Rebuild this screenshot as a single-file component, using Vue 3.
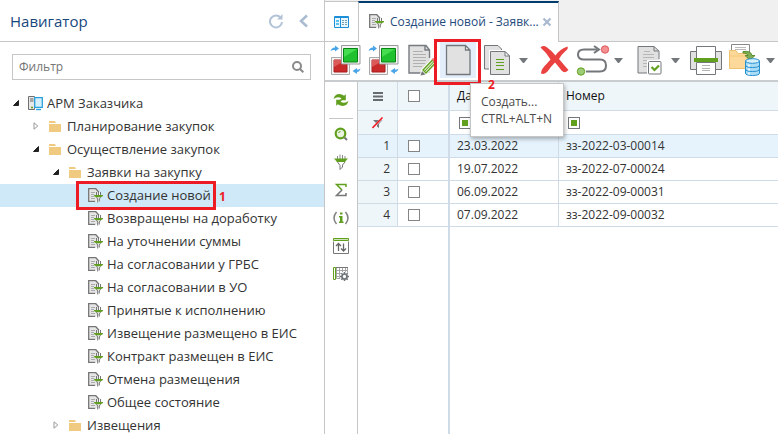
<script setup>
import { ref } from 'vue'

const filter = ref('')
const statuses = [
  'Создание новой',
  'Возвращены на доработку',
  'На уточнении суммы',
  'На согласовании у ГРБС',
  'На согласовании в УО',
  'Принятые к исполнению',
  'Извещение размещено в ЕИС',
  'Контракт размещен в ЕИС',
  'Отмена размещения',
  'Общее состояние',
]
const tree = [
  { label: 'АРМ Заказчика', level: 0, state: 'open', icon: 'server' },
  { label: 'Планирование закупок', level: 1, state: 'closed', icon: 'folder' },
  { label: 'Осуществление закупок', level: 1, state: 'open', icon: 'folder' },
  { label: 'Заявки на закупку', level: 2, state: 'open', icon: 'folder' },
  ...statuses.map((label, i) => ({ label, level: 3, state: 'leaf', icon: 'docfilter', selected: i === 0 })),
  { label: 'Извещения', level: 2, state: 'closed', icon: 'folder' },
]
const rows = [
  { date: '23.03.2022', number: 'зз-2022-03-00014' },
  { date: '19.07.2022', number: 'зз-2022-07-00024' },
  { date: '06.09.2022', number: 'зз-2022-09-00031' },
  { date: '07.09.2022', number: 'зз-2022-09-00032' },
]
const checked = ref(rows.map(() => false))
const allChecked = ref(false)
const tools = [
  { icon: 'sync', label: 'Синхронизация' },
  { icon: 'sync', label: 'Обмен' },
  { icon: 'edit', label: 'Редактировать' },
  { icon: 'new', label: 'Создать' },
  { icon: 'copy', label: 'Копировать', menu: true },
  { icon: 'delete', label: 'Удалить' },
  { icon: 'route', label: 'Маршрут', menu: true },
  { icon: 'check', label: 'Проверить', menu: true },
  { icon: 'print', label: 'Печать' },
  { icon: 'export', label: 'Экспорт', menu: true },
]
const sideTools = [
  { icon: 'search', label: 'Поиск' },
  { icon: 'funnel', label: 'Фильтр' },
  { icon: 'sum', label: 'Итоги' },
  { icon: 'info', label: 'Информация' },
  { icon: 'sort', label: 'Сортировка' },
  { icon: 'columns', label: 'Колонки' },
]
</script>

<template>
  <div class="app">
    <svg class="sprite" aria-hidden="true">
      <symbol id="docfilter" viewBox="0 0 15 15">
        <path d="M.7.7h7.8l2.8 2.8V13.3H.7z" fill="#e6e6e6" stroke="#fff" />
        <path d="M11 4.2 7.8.7H.7v12.6h6.5" fill="none" stroke="#757575" stroke-width="1.3" />
        <path d="M3 4.5h4M3 6.5h3M3 8.5h3M3 10.5h4" stroke="#aaa" />
        <path d="M8.5 4v3M10.5 3v4M12.5 4v3" stroke="#757575" />
        <path d="M6 7h9v1l-2 1.300H8L6 8z" fill="#61a01f" />
        <path d="M8.500 9.200 9.700 11v3.500M12.500 9.200 11.300 11v2.500" fill="none" stroke="#757575" />
      </symbol>
      <symbol id="folder" viewBox="0 0 15 15">
        <path d="M1 2h6l1 2H1zM1 5h12v8H1z" fill="#efca80" />
      </symbol>
      <symbol id="server" viewBox="0 0 15 15">
        <path d="M.5.5h6v13h-6z" fill="#e8e8e8" stroke="#6f6f6f" />
        <path d="M2 3h3.500M2 5h3.500" stroke="#666" stroke-width="1.200" />
        <path d="M3 11.500h2" stroke="#61a01f" stroke-width="1.500" />
        <path d="M6.700 1.700h7.600v9.600H6.700z" fill="#d5f0fc" stroke="#2ba1dc" stroke-width="1.300" />
        <path d="M8 13.500h5" stroke="#2ba1dc" stroke-width="1.400" />
      </symbol>
      <symbol id="sync" viewBox="0 0 32 32">
        <path d="M2.500 13.500h18v17h-18z" fill="#f5f5f5" stroke="#aaa" />
        <path d="M5 16h13v12H5z" fill="#c92a2a" stroke="#a91c1c" />
        <path d="M5 16h12L5 23z" fill="#dc5959" />
        <path d="M12.500 1.500h18.500v18.500H12.500z" fill="#f5f5f5" stroke="#999" />
        <path d="M14.500 4.500h14v13.500h-14z" fill="#1fc22e" stroke="#078413" />
        <path d="M15 5h13L15 13z" fill="#45dc50" />
        <path d="M1.500 7Q2.500 3.500 6 3.500V1.500l4 3-4 3V6Q3.500 5.500 1.500 7zM31.500 24.500Q30.500 28 28 28v2l-4.500-3 4.500-3v1.500Q30 26 31.500 24.500z" fill="#4aa5e8" />
      </symbol>
      <symbol id="edit" viewBox="0 0 32 32">
        <path d="M4 1.500h17l4 4.500v23H4z" fill="#e1e1e1" />
        <path d="M17 29H4V1.500h17L24.500 6v8M20 2v4h4" fill="none" stroke="#777b80" stroke-width="1.400" />
        <path d="M8 7.500h10M8 10.500h13M8 13.500h13M8 16.500h13M8 19.500h12M8 22.500h9" stroke="#b0b0b0" />
        <path d="M15.500 31.500 17 26l10-10.500 4 4L20.500 30z" fill="#fff" stroke="#fff" stroke-width="1.500" />
        <path d="m18 26 9.500-10 3 3-9.500 10z" fill="#d9ecc6" stroke="#61a01f" stroke-width="1.300" />
        <path d="m19.500 27.500 9.500-10" stroke="#61a01f" />
        <path d="m26.500 15 2-1 3 3-1 2.500z" fill="#ef7780" />
        <path d="M15.500 31.500 17 27l3.500 3.500z" fill="#777" />
      </symbol>
      <symbol id="new" viewBox="0 0 32 32">
        <path d="M4.500 1.500h19L28 6v24.500H4.500z" fill="#e1e1e1" />
        <path d="M23.500 1.500V6H28z" fill="#fff" />
        <path d="M4.500 1.500h19L28 6v24.500H4.500zM23.500 1.500V6H28" fill="none" stroke="#73777b" stroke-width="1.300" />
      </symbol>
      <symbol id="copy" viewBox="0 0 32 32">
        <path d="M3.500 1.500H17L20.500 5v20h-17z" fill="#e1e1e1" stroke="#73777b" />
        <path d="M8 6h17l5 5v21H8z" fill="#fff" />
        <path d="M9.500 7.500H24l4.500 4.500v18.500h-19z" fill="#e1e1e1" stroke="#73777b" />
        <path d="M24 7.500V12h4.500z" fill="#fff" stroke="#73777b" />
        <path d="M15 15.500h8M15 18.500h8M15 21.500h8M15 25.500h8" stroke="#61a01f" stroke-width="1.200" />
      </symbol>
      <symbol id="delete" viewBox="0 0 32 32">
        <path d="M2.500 3.500q3-2.500 6-.5Q13.500 6.500 17.500 11.500 22 5 29.500 2.500q1 2.500-2 4.500-4.500 4-6.500 8 5 6 9.500 11-3.500 4-7 .5-3-4-6.500-8Q13 22.500 9.500 27.500q-3 3.500-6.500 2 0-4.500 5.500-9.500l4-4.500Q9 9 2.500 3.500z" fill="#ea4141" />
      </symbol>
      <symbol id="route" viewBox="0 0 36 32">
        <path d="M23 5.500H10q-6 0-6 5t6 5h16q6 0 6 6t-6 6H12" fill="none" stroke="#73777b" stroke-width="2" />
        <path d="m20 2 5 3.500L20 9" fill="none" stroke="#73777b" stroke-width="2" />
        <circle cx="31" cy="5.500" r="3.700" fill="#f68f91" stroke="#dd5a5d" />
        <circle cx="7" cy="27.500" r="3.700" fill="#9dcc76" stroke="#61a01f" />
      </symbol>
      <symbol id="check" viewBox="0 0 32 32">
        <path d="M5 2.500h16L26 7v22H5z" fill="#e1e1e1" />
        <path d="M15 29H5V2.500h16L26 7v8M21 3v4h4" fill="none" stroke="#73777b" />
        <path d="M11 7.500h6M10 10.500h11M10 13.500h11M10 16.500h8M10 19.500h5M10 22.500h5" stroke="#b7b7b7" />
        <path d="M14 16h15v15H14z" fill="#fff" />
        <rect x="15.500" y="17.500" width="12.500" height="12.500" rx="1" fill="#fff" stroke="#73777b" />
        <path d="m18.500 23 3 3 4.500-4.500" fill="none" stroke="#61a01f" stroke-width="2.200" />
      </symbol>
      <symbol id="print" viewBox="0 0 34 32">
        <path d="M1.500 7.500h31v18h-31z" fill="#e1e1e1" stroke="#73777b" />
        <path d="M7.500 2.500h19v12h-19zM7.500 18.500h19v12h-19z" fill="#fff" stroke="#73777b" />
        <path d="M5 14h24v4H5z" fill="#61a01f" />
        <path d="M13 21.500h8M13 24.500h8M13 26.500h8" stroke="#b5b5b5" />
      </symbol>
      <symbol id="export" viewBox="0 0 34 32">
        <path d="M4.500 8V.5h18V12" fill="#fff" stroke="#888" />
        <path d="M8 3.500h11M8 5.500h11" stroke="#bbb" />
        <path d="M2.500 6.500H9l2 3h9.500v15h-18z" fill="#fcd99a" stroke="#eec16e" />
        <path d="M3 12h16" stroke="#f4c774" />
        <path d="M16 7.500q8-1 9 4h3l-5 4.500-5-4.500h3q-1-3-5-2.500z" fill="#80ad55" stroke="#5b8f2d" />
        <path d="M18.500 17v12q0 2.500 7 2.500t7-2.500V17z" fill="#a9dcf6" stroke="#268fce" />
        <ellipse cx="25.500" cy="17" rx="7" ry="2.300" fill="#d7f1fc" stroke="#268fce" />
        <path d="M18.500 21q0 2.500 7 2.500t7-2.500M18.500 25q0 2.500 7 2.500t7-2.500" fill="none" stroke="#268fce" />
        <path d="M22 20.500v2M22 24.500v2M22 28.500v2" stroke="#fff" stroke-width="1.500" />
      </symbol>
      <symbol id="refresh" viewBox="0 0 16 16">
        <path d="M.5 7Q2 1.500 7.500 2.200q2 .3 3.500 1.500l1.800-1.400v6H6.500l2-2Q4.500 3.800.5 7zM15.500 9Q14 14.500 8.500 13.800q-2-.3-3.500-1.500l-1.800 1.400v-6h6.300l-2 2Q11.500 12.200 15.500 9z" fill="#61a01f" />
      </symbol>
      <symbol id="search" viewBox="0 0 16 16">
        <circle cx="7.500" cy="7.500" r="4.800" fill="#e9f3df" stroke="#61a01f" stroke-width="2.200" />
        <path d="M5.500 7q.5-1.500 2-1.500" fill="none" stroke="#61a01f" />
        <path d="m11.500 11.500 2.500 2.500" stroke="#777" stroke-width="2" />
      </symbol>
      <symbol id="funnel" viewBox="0 0 16 16">
        <path d="M4.500 2v3M7 .5V5M9.500 1v4M12 2v3" stroke="#8b8b8b" />
        <path d="M1 4.500h14L12 8H4z" fill="#61a01f" />
        <path d="m4.500 8 2.500 3.500v4L9.500 13v-2L12 8" fill="none" stroke="#777" />
      </symbol>
      <symbol id="sum" viewBox="0 0 16 16">
        <path d="M13 5V2.500H3.500L9 8" fill="none" stroke="#61a01f" stroke-width="1.500" />
        <path d="m9 8-5.500 5.500H13V11" fill="none" stroke="#777" stroke-width="1.500" />
      </symbol>
      <symbol id="info" viewBox="0 0 16 16">
        <path d="M3.500 2q-5 6 0 12M12.500 2q5 6 0 12" fill="none" stroke="#808080" stroke-width="1.500" />
        <path d="M7 2.500h2.500v2H7zM6 6h3.500v5.500h1V13H6v-1.500h1v-4H6z" fill="#61a01f" />
      </symbol>
      <symbol id="sort" viewBox="0 0 16 16">
        <path d="M.5 3.500v12h15v-12" fill="#fff" stroke="#777" />
        <path d="M.5.5h15v2H.5z" fill="#cfe4bb" stroke="#61a01f" />
        <path d="M5.500 13V6M3 8l2.500-2.500L8 8M10.500 5.500v7M8 10.500l2.500 2.500 2.500-2.500" fill="none" stroke="#666" stroke-width="1.300" />
      </symbol>
      <symbol id="columns" viewBox="0 0 16 16">
        <path d="M3.500 1.500h11v11h-11zM3.500 4.500h11M3.500 7.500h11M3.500 10.500h11M6.500 1.500v11M9.500 1.500v11M12.500 1.500v11" fill="none" stroke="#a5a5a5" />
        <path d="M.5 1.500h2v12h-2z" fill="#fff" stroke="#61a01f" />
        <path d="M3 1.500h12" stroke="#777" />
        <circle cx="11.500" cy="10.500" r="4.800" fill="#fff" />
        <path d="M11.500 6v9M7 10.500h9M8.300 7.300l6.400 6.400M14.700 7.300l-6.400 6.400" stroke="#70757a" stroke-width="1.500" />
        <circle cx="11.500" cy="10.500" r="2.500" fill="#fff" stroke="#70757a" stroke-width="1.700" />
      </symbol>
    </svg>

    <aside class="sidebar">
      <header class="side-head">
        <h1>Навигатор</h1>
        <button class="plain" aria-label="Обновить">
          <svg width="16" height="16" viewBox="0 0 16 16">
            <path d="M12.500 4.500A6 6 0 1 0 14 9" fill="none" stroke="#b3c3d7" stroke-width="2" />
            <path d="M14.500 1v5.500H9z" fill="#b3c3d7" />
          </svg>
        </button>
        <button class="plain" aria-label="Свернуть">
          <svg width="16" height="16" viewBox="0 0 16 16">
            <path d="m11 2.500-6 5.500 6 5.500" fill="none" stroke="#a9bbd1" stroke-width="2.500" />
          </svg>
        </button>
      </header>
      <label class="filter">
        <input v-model="filter" type="text" placeholder="Фильтр" aria-label="Фильтр" />
        <svg width="12" height="12" viewBox="0 0 12 12">
          <circle cx="5" cy="5" r="4" fill="none" stroke="#8a8a8a" stroke-width="2" />
          <path d="m8 8 3.300 3.300" stroke="#8a8a8a" stroke-width="2" />
        </svg>
      </label>
      <ul class="tree">
        <li v-for="n in tree" :key="n.label" :class="['level' + n.level, { selected: n.selected }]">
          <svg class="twist" width="8" height="8" viewBox="0 0 8 8">
            <path v-if="n.state === 'open'" d="M6.500 1.500v5h-5z" fill="#222" stroke="#222" />
            <path v-else-if="n.state === 'closed'" d="M2 .8v6.400L5.800 4z" fill="#fff" stroke="#999" />
          </svg>
          <svg class="node" width="15" height="15"><use :href="'#' + n.icon" /></svg>
          <span>{{ n.label }}</span>
          <span v-if="n.selected" class="frame step-one"></span>
          <b v-if="n.selected" class="step-num num-one">1</b>
        </li>
      </ul>
    </aside>

    <main class="main">
      <nav class="tabs">
        <button class="home" aria-label="Главная">
          <svg width="15" height="12" viewBox="0 0 15 12">
            <rect width="15" height="12" rx="1" fill="#1c8fd8" />
            <path d="M1 2h5v9H1zM7 2h7v9H7z" fill="#e9f7fe" />
            <path d="M2 4h3v2H2zM2 7h3v2H2z" fill="#59c0ee" />
            <path d="M8 4.500h2M11 4.500h2M8 6.500h2M11 6.500h2M8 8.500h2M11 8.500h2" stroke="#7e9db2" />
          </svg>
        </button>
        <div class="tab">
          <svg width="15" height="15"><use href="#docfilter" /></svg>
          <span>Создание новой - Заявк...</span>
          <button class="plain close" aria-label="Закрыть">
            <svg width="10" height="10" viewBox="0 0 10 10">
              <path d="m1.500 1.500 7 7M8.500 1.500l-7 7" stroke="#a9b9cf" stroke-width="2.200" />
            </svg>
          </button>
        </div>
        <div class="tabs-rest"></div>
      </nav>

      <div class="toolbar">
        <template v-for="t in tools" :key="t.label">
          <div class="tool-wrap">
            <button class="tool" :class="{ active: t.icon === 'new' }" :aria-label="t.label">
              <svg :width="t.icon === 'print' || t.icon === 'export' ? 34 : t.icon === 'route' ? 36 : 32" height="32">
                <use :href="'#' + t.icon" />
              </svg>
            </button>
            <template v-if="t.icon === 'new'">
              <div class="tooltip" role="tooltip">Создать...<br />CTRL+ALT+N</div>
              <span class="frame step-two"></span>
              <b class="step-num num-two">2</b>
            </template>
          </div>
          <button v-if="t.menu" class="drop" :aria-label="t.label + ': меню'">
            <svg width="9" height="5" viewBox="0 0 9 5"><path d="M0 0h9L5 5H4z" fill="#73777b" /></svg>
          </button>
        </template>
      </div>

      <div class="work">
        <div class="rail">
          <button class="plain" aria-label="Обновить список">
            <svg width="16" height="16"><use href="#refresh" /></svg>
          </button>
          <hr />
          <button v-for="s in sideTools" :key="s.icon" class="plain" :aria-label="s.label">
            <svg width="16" height="16"><use :href="'#' + s.icon" /></svg>
          </button>
        </div>
        <div class="grid">
          <table>
            <colgroup><col class="c-num" /><col class="c-check" /><col class="c-date" /><col /></colgroup>
            <thead>
              <tr class="heads">
                <th class="mid">
                  <svg width="10" height="9" viewBox="0 0 10 9"><path d="M0 1h10M0 4.500h10M0 8h10" stroke="#666b70" stroke-width="2" /></svg>
                </th>
                <th class="pick"><input v-model="allChecked" type="checkbox" aria-label="Выбрать все" /></th>
                <th>Дата</th>
                <th>Номер</th>
              </tr>
              <tr class="filters">
                <td class="mid">
                  <svg width="12" height="12" viewBox="0 0 12 12">
                    <path d="M1 3h9.500L7 7v4L5 9.500V7z" fill="#73777b" />
                    <path d="M1 10.500 10.500 1" stroke="#fff" stroke-width="2" />
                    <path d="M.5 11 10.500 .5" stroke="#ee1c25" stroke-width="1.600" />
                  </svg>
                </td>
                <td></td>
                <td><button class="cond" aria-label="Условие: дата"></button></td>
                <td><button class="cond" aria-label="Условие: номер"></button></td>
              </tr>
            </thead>
            <tbody>
              <tr v-for="(r, i) in rows" :key="r.number" :class="{ current: i === 0 }">
                <td class="num">{{ i + 1 }}</td>
                <td class="pick"><input v-model="checked[i]" type="checkbox" :aria-label="'Строка ' + (i + 1)" /></td>
                <td>{{ r.date }}</td>
                <td>{{ r.number }}</td>
              </tr>
            </tbody>
          </table>
        </div>
      </div>
    </main>
  </div>
</template>

<style>
body {
  margin: 0;
}
</style>

<style scoped>
* {
  box-sizing: border-box;
}
.app {
  display: flex;
  height: 100vh;
  overflow: hidden;
  background: #fff;
  color: #333;
  font: 13px/16px 'Open Sans', 'Noto Sans', sans-serif;
}
.sprite {
  position: absolute;
  width: 0;
  height: 0;
}
svg {
  display: block;
  flex: none;
}
button {
  display: flex;
  align-items: center;
  justify-content: center;
  padding: 0;
  border: 0;
  background: none;
  font: inherit;
}
.sidebar {
  flex: none;
  width: 325px;
  border-right: 1px solid #c6c6c6;
}
.side-head {
  display: flex;
  align-items: center;
  gap: 12px;
  height: 42px;
  padding: 0 12px 0 10px;
  border-bottom: 1px solid #c6c6c6;
}
h1 {
  flex: 1;
  margin: 0;
  color: #17477d;
  font-size: 15px;
  font-weight: 400;
}
.filter {
  display: flex;
  align-items: center;
  height: 26px;
  margin: 12px 13px 12px 12px;
  padding: 0 6px;
  border: 1px solid #c6c6c6;
}
.filter input {
  flex: 1;
  min-width: 0;
  padding: 0;
  border: 0;
  outline: 0;
  background: none;
  color: #333;
  font: inherit;
  font-size: 12px;
}
.filter input::placeholder {
  color: #757575;
}
.tree {
  margin: 0;
  padding: 0;
  list-style: none;
}
.tree li {
  position: relative;
  display: flex;
  align-items: center;
  height: 23px;
  padding-bottom: 1px;
  white-space: nowrap;
}
.level0 {
  padding-left: 12px;
}
.level1 {
  padding-left: 32px;
}
.level2 {
  padding-left: 52px;
}
.level3 {
  padding-left: 72px;
}
.twist {
  margin-right: 8px;
}
.node {
  margin-right: 4px;
}
.selected {
  background: #d0e9f8;
}
.frame {
  position: absolute;
  border: 3px solid #ed1c24;
  pointer-events: none;
}
.step-one {
  left: 76px;
  top: -3px;
  width: 140px;
  height: 29px;
}
.step-num {
  position: absolute;
  color: #ed1c24;
  font-size: 12px;
}
.num-one {
  left: 219px;
  top: 5px;
}
.main {
  display: flex;
  flex: 1;
  flex-direction: column;
  min-width: 0;
}
.tabs {
  display: flex;
  height: 42px;
  padding-top: 1px;
  background: #f0f0f0;
}
.home {
  width: 33px;
  border-top: 1px solid #c6c6c6;
  border-bottom: 1px solid #c6c6c6;
  background: #fff;
}
.tab {
  display: flex;
  align-items: center;
  width: 201px;
  padding: 0 6px 2px 10px;
  border: 1px solid #c6c6c6;
  border-top: 2px solid #003b70;
  border-bottom: 0;
  background: #fff;
  color: #1f4a7c;
  font-size: 12px;
  white-space: nowrap;
}
.tab span {
  flex: 1;
  margin-left: 6px;
}
.tabs-rest {
  flex: 1;
  border-bottom: 1px solid #c6c6c6;
}
.toolbar {
  display: flex;
  flex: none;
  height: 40px;
  padding: 0 0 2px 1px;
  border-bottom: 2px solid #c9cccf;
}
.tool-wrap {
  position: relative;
  display: flex;
  flex: none;
  width: 38px;
}
.tool {
  flex: 1;
}
.tool.active {
  margin-right: 2px;
  background: #e4eefa;
}
.drop {
  flex: none;
  width: 15px;
  margin-right: 4px;
}
.drop:last-child {
  margin-right: 0;
}
.step-two {
  z-index: 1;
  left: -6px;
  top: -3px;
  width: 47px;
  height: 46px;
}
.num-two {
  z-index: 3;
  left: 48px;
  top: 35px;
}
.tooltip {
  position: absolute;
  z-index: 2;
  left: 30px;
  top: 41px;
  width: 94px;
  padding: 9px 10px;
  border: 1px solid #c6c6c6;
  background: #fff;
  box-shadow: 1px 2px 4px rgba(0, 0, 0, 0.3);
  color: #4c4c4c;
  font-size: 12px;
  line-height: 17px;
  white-space: nowrap;
}
.work {
  display: flex;
  flex: 1;
  min-height: 0;
}
.rail {
  flex: none;
  width: 33px;
  padding-top: 4px;
  border-right: 1px solid #c6c6c6;
}
.rail button {
  width: 32px;
  height: 28px;
}
.rail hr {
  margin: 4px 4px 1px;
  border: 0;
  border-top: 1px solid #c6c6c6;
}
.grid {
  flex: 1;
  min-width: 0;
  background: linear-gradient(#cfdbe7, #cfdbe7) 90px 0 / 2px 100% no-repeat;
}
table {
  width: 100%;
  border-spacing: 0;
  table-layout: fixed;
}
.c-num {
  width: 40px;
}
.c-check {
  width: 52px;
}
.c-date {
  width: 109px;
}
th,
td {
  height: 23px;
  padding: 0 7px;
  border-right: 1px solid #cfdbe7;
  border-bottom: 1px solid #cfdbe7;
  color: #333;
  font-size: 12px;
  font-weight: 400;
  text-align: left;
  white-space: nowrap;
}
th:last-child,
td:last-child {
  border-right: 0;
}
th:nth-child(2),
td:nth-child(2) {
  border-right-width: 2px;
}
.heads th {
  height: 29px;
  background: #eff6fa;
  color: #111;
}
td:first-child {
  background: #eff6fa;
}
.filters td {
  height: 24px;
}
.mid svg {
  margin: 0 auto;
}
.num {
  text-align: right;
}
.pick {
  padding: 0 10px;
}
.current td {
  background: #e6f3fd;
}
input[type='checkbox'] {
  display: block;
  width: 12px;
  height: 12px;
  margin: 0;
  appearance: none;
  border: 1px solid #858585;
  background: #fff;
}
.cond {
  width: 12px;
  height: 12px;
  margin-left: 2px;
  padding: 2px;
  border: 1px solid #73777b;
  background: #61a01f content-box;
}
</style>
